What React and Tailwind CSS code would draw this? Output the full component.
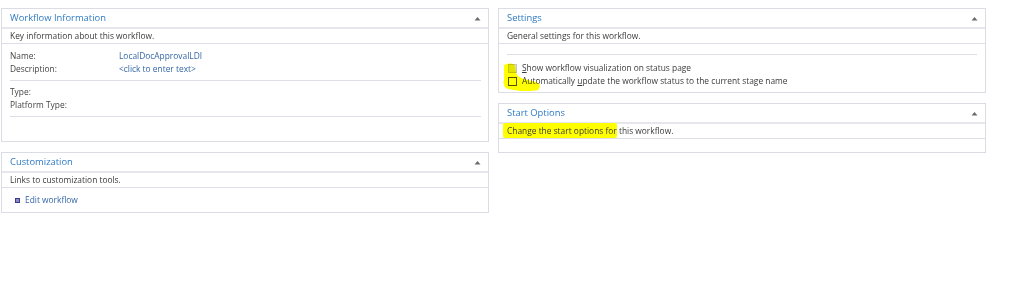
function Chevron() {
  return (
    <svg width="7" height="5" viewBox="0 0 7 5" className="mr-[1px]">
      <path d="M0.5 4.5 L3.5 1 L6.5 4.5 Z" fill="#6b6b6b" />
    </svg>
  );
}

function Panel({ title, subtitle, children }) {
  return (
    <div className="border border-[#dcdce4] bg-white">
      <div className="flex h-[20px] items-center justify-between border-b-2 border-[#e6e6ec] pl-[8px] pr-[6px]">
        <span className="text-[9.4px] text-[#2f7bc4]">{title}</span>
        <Chevron />
      </div>
      <div className="flex h-[15px] items-center border-b border-[#dedee6] pl-[8px] text-[8.4px] text-[#3a3a3a]">
        {subtitle}
      </div>
      {children}
    </div>
  );
}

function InfoRow({ label, value }) {
  return (
    <div className="flex h-[13px] items-center">
      <span className="w-[109px] text-[#444]">{label}</span>
      {value && <span className="text-[#3566a6]">{value}</span>}
    </div>
  );
}

export default function App() {
  return (
    <div
      className="h-[282px] w-[1024px] bg-white pl-[1px] pt-[8px]"
      style={{ fontFamily: '"Open Sans", "Noto Sans", sans-serif' }}
    >
      <div className="flex gap-[9px]">
        <div className="flex w-[488px] flex-col gap-[10px]">
          <Panel title="Workflow Information" subtitle="Key information about this workflow.">
            <div className="h-[97px] pl-[8px] pr-[7px] pt-[6px] text-[8.4px]">
              <InfoRow label="Name:" value="LocalDocApprovalLDI" />
              <InfoRow label="Description:" value="<click to enter text>" />
              <div className="mt-[4px] border-t border-[#dedee6]" />
              <div className="pt-[5px]">
                <InfoRow label="Type:" />
                <InfoRow label="Platform Type:" />
              </div>
              <div className="mt-[4px] border-t border-[#dedee6]" />
            </div>
          </Panel>
          <Panel title="Customization" subtitle="Links to customization tools.">
            <div className="flex h-[24px] items-center pl-[13px] text-[8.4px]">
              <span className="mr-[5px] inline-block h-[5px] w-[5px] border border-[#3c3c8c] bg-[#8a8ac8]" />
              <span className="text-[#3566a6]">Edit workflow</span>
            </div>
          </Panel>
        </div>

        <div className="flex w-[488px] flex-col gap-[10px]">
          <Panel title="Settings" subtitle="General settings for this workflow.">
            <div className="relative h-[48px] pl-[8px] pr-[8px] pt-[10px] text-[8.4px] text-[#3a3a3a]">
              <div className="border-t border-[#dedee6]" />
              <div className="mt-[7px] flex h-[13px] items-center">
                <span className="ml-[1px] mr-[5px] inline-block h-[9px] w-[9px] border border-[#c4c4c4] bg-[#e4e4e4]" />
                <span>
                  <span className="underline">S</span>how workflow visualization on status page
                </span>
              </div>
              <div className="flex h-[13px] items-center">
                <span className="ml-[1px] mr-[5px] inline-block h-[9px] w-[9px] border border-[#555]" />
                <span>
                  Automatically <span className="underline">u</span>pdate the workflow status to the current stage name
                </span>
              </div>
              <svg
                className="pointer-events-none absolute left-[3px] top-[18px] mix-blend-multiply"
                width="40"
                height="30"
                viewBox="0 0 40 30"
              >
                <path
                  d="M2 3 C6 1 10 1 13 3 L14 10 C15 14 18 16 22 17 L34 20 C38 21 39 25 36 28 C28 30 14 29 6 27 C2 26 1 22 2 18 Z"
                  fill="#ffff00"
                />
              </svg>
            </div>
          </Panel>
          <Panel
            title="Start Options"
            subtitle={
              <span>
                <span className="-ml-[4px] rounded-[2px] bg-[#ffff00] py-[2px] pl-[4px]">Change the start options for</span>{" "}
                this workflow.
              </span>
            }
          >
            <div className="h-[13px]" />
          </Panel>
        </div>
      </div>
    </div>
  );
}
